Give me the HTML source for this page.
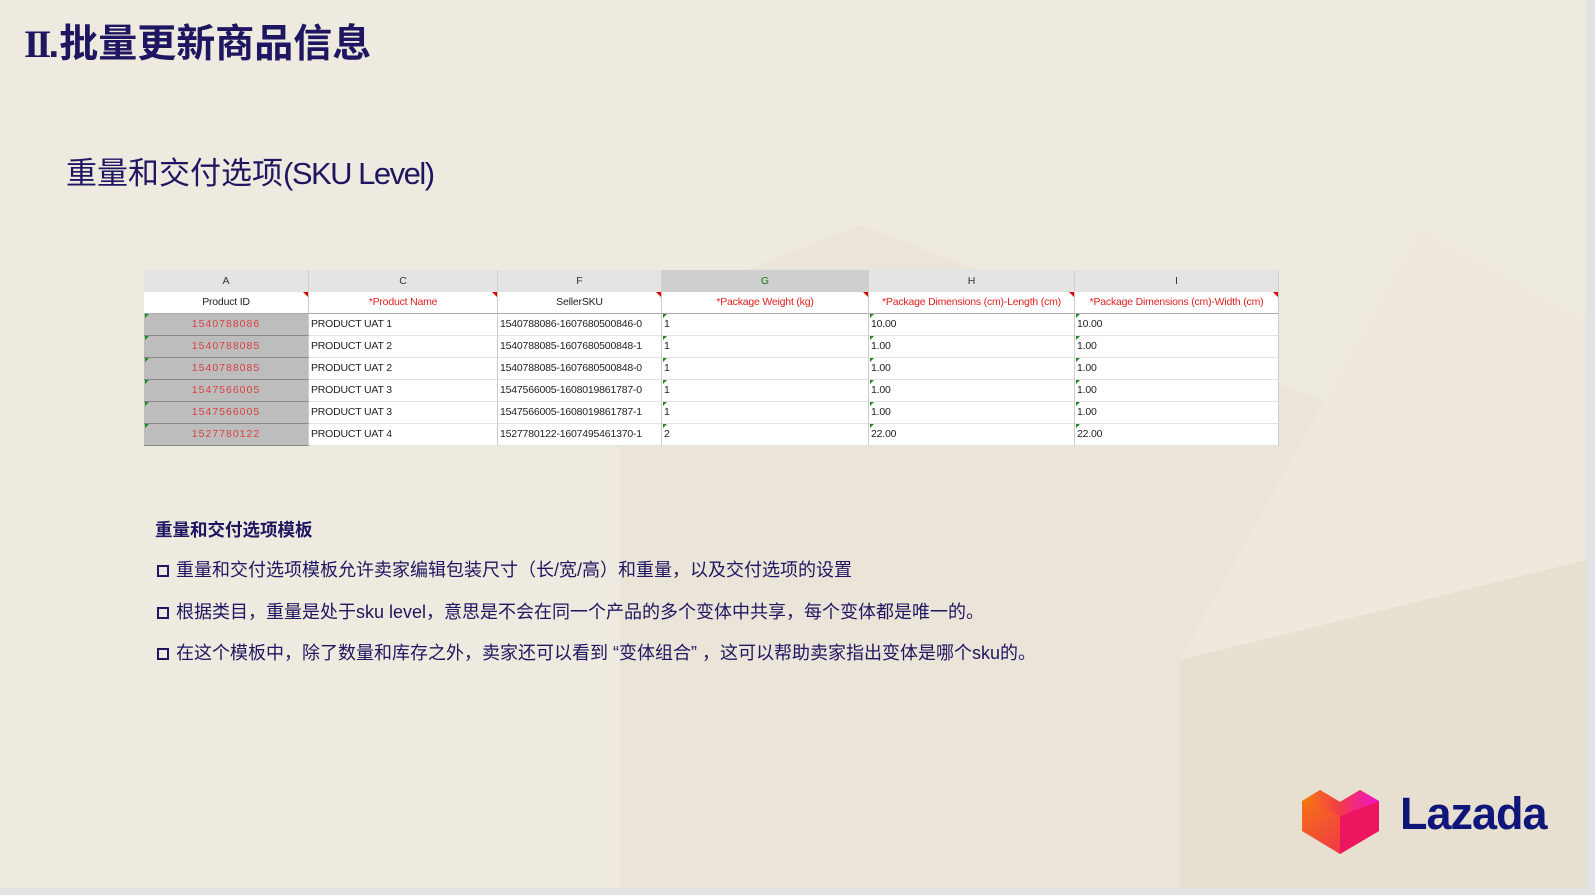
<!DOCTYPE html>
<html><head><meta charset="utf-8"><style>
*{margin:0;padding:0;box-sizing:border-box}
body{width:1595px;height:895px;position:relative;overflow:hidden;background:#e3e3e5;font-family:"Liberation Sans","Noto Sans CJK SC",sans-serif}
#slide{position:absolute;left:0;top:0;width:1586px;height:888px;background:#efeadf;overflow:hidden}
.a{position:absolute;white-space:nowrap}
.c{position:absolute;font-size:10.5px;color:#222;line-height:21.6px;white-space:nowrap;overflow:hidden;letter-spacing:-0.2px}
.hd{position:absolute;background:#e4e4e4;height:22px;top:270px;font-size:10.5px;color:#333;text-align:center;line-height:22px;border-right:1px solid #d0d0d0}
.tri{position:absolute;width:0;height:0;border-left:5px solid transparent;border-top:5px solid #d00}
.gt{position:absolute;width:0;height:0;border-right:4px solid transparent;border-top:4px solid #1a8a1a}
</style></head><body>
<div id="slide">
<svg class="a" style="left:0;top:0" width="1586" height="888">
<polygon points="620,320 860,225 1586,500 1586,888 620,888" fill="#ebe5d9"/>
<polygon points="1180,660 1586,560 1586,888 1180,888" fill="#e7e0d1"/>
<polygon points="1180,660 1420,230 1586,320 1586,560" fill="#eee8dd"/>
</svg>
<div class="a" style="left:24px;top:20px;font-size:39px;font-weight:bold;color:#1e1660;line-height:50px"><span style="font-family:'Liberation Serif',serif;letter-spacing:-3px">II</span>.批量更新商品信息</div>
<div class="a" style="left:66px;top:153px;font-size:31px;color:#1e1660;line-height:42px"><span>重量和交付选项</span><span style="letter-spacing:-1.5px">(SKU Level)</span></div>

<div class="a" style="left:144px;top:270px;width:1135px;height:176px;background:#fff"></div>
<div class="hd" style="left:144px;width:165px">A</div>
<div class="hd" style="left:309px;width:189px">C</div>
<div class="hd" style="left:498px;width:164px">F</div>
<div class="hd" style="left:662px;width:207px;background:#cfcfcf;color:#1a7a1a">G</div>
<div class="hd" style="left:869px;width:206px">H</div>
<div class="hd" style="left:1075px;width:204px">I</div>
<div class="a" style="left:144px;top:314px;width:165px;height:132px;background:#bdbdbd"></div>
<div id="rows"></div>
<div class="a" style="left:155px;top:517px;font-size:17.5px;font-weight:bold;color:#1e1660">重量和交付选项模板</div>
<div class="a" style="left:157px;top:558px;font-size:18px;color:#1e1660;line-height:24px"><span style="display:inline-block;width:12px;height:12px;border:2.5px solid #1e1660;margin-right:7px;vertical-align:-1px"></span>重量和交付选项模板允许卖家编辑包装尺寸（长/宽/高）和重量，以及交付选项的设置</div>
<div class="a" style="left:157px;top:600px;font-size:18px;color:#1e1660;line-height:24px"><span style="display:inline-block;width:12px;height:12px;border:2.5px solid #1e1660;margin-right:7px;vertical-align:-1px"></span>根据类目，重量是处于sku level，意思是不会在同一个产品的多个变体中共享，每个变体都是唯一的。</div>
<div class="a" style="left:157px;top:641px;font-size:18px;color:#1e1660;line-height:24px"><span style="display:inline-block;width:12px;height:12px;border:2.5px solid #1e1660;margin-right:7px;vertical-align:-1px"></span>在这个模板中，除了数量和库存之外，卖家还可以看到 “变体组合” ，这可以帮助卖家指出变体是哪个sku的。</div>

<svg class="a" style="left:1300px;top:786px" width="82" height="70" viewBox="0 0 82 70">
<defs><linearGradient id="g1" x1="0" y1="0" x2="1" y2="0"><stop offset="0" stop-color="#f77d0a"/><stop offset="0.5" stop-color="#f23a4a"/><stop offset="1" stop-color="#f012d0"/></linearGradient>
<linearGradient id="g2" x1="0" y1="0" x2="1" y2="1"><stop offset="0" stop-color="#f47a10"/><stop offset="1" stop-color="#f0205a"/></linearGradient></defs>
<path d="M2,15 L20,4 L40,16 L60,4 L79,15 L79,45 L40,68 L2,45 Z" fill="url(#g2)"/>
<path d="M40,28 L79,15 L79,45 L40,68 Z" fill="#ee1560"/>
<path d="M2,15 L20,4 L40,16 L60,4 L79,15 L40,30 Z" fill="url(#g1)"/>
</svg>
<div class="a" style="left:1400px;top:786px;font-size:45px;font-weight:bold;color:#10157a;line-height:56px;letter-spacing:-1px">Lazada</div>
</div>
<script>
var cols=[144,309,498,662,869,1075,1279];
var hdr=[["Product ID","#222"],["*Product Name","#e02020"],["SellerSKU","#222"],["*Package Weight (kg)","#e02020"],["*Package Dimensions (cm)-Length (cm)","#e02020"],["*Package Dimensions (cm)-Width (cm)","#e02020"]];
var data=[["1540788086","PRODUCT UAT 1","1540788086-1607680500846-0","1","10.00","10.00"],
["1540788085","PRODUCT UAT 2","1540788085-1607680500848-1","1","1.00","1.00"],
["1540788085","PRODUCT UAT 2","1540788085-1607680500848-0","1","1.00","1.00"],
["1547566005","PRODUCT UAT 3","1547566005-1608019861787-0","1","1.00","1.00"],
["1547566005","PRODUCT UAT 3","1547566005-1608019861787-1","1","1.00","1.00"],
["1527780122","PRODUCT UAT 4","1527780122-1607495461370-1","2","22.00","22.00"]];
var h="";
for(var i=0;i<6;i++){var w=cols[i+1]-cols[i];
h+='<div class="c" style="left:'+cols[i]+'px;top:292px;width:'+w+'px;height:22px;text-align:center;color:'+hdr[i][1]+';border-right:1px solid #ccc;border-bottom:1px solid #aaa">'+hdr[i][0]+'</div>';
h+='<div class="tri" style="left:'+(cols[i+1]-6)+'px;top:292px"></div>';}
for(var r=0;r<6;r++){var y=314+r*22;
for(var i=0;i<6;i++){var w=cols[i+1]-cols[i];
var st='left:'+cols[i]+'px;top:'+y+'px;width:'+w+'px;height:22px;border-bottom:1px solid '+(i==0?'#888':'#e2e2e2')+';border-right:1px solid #ccc;';
if(i==0)st+='text-align:center;color:#d84040;letter-spacing:1px;font-family:"DejaVu Sans Mono",monospace;font-size:11px;';else st+='padding-left:2px;';
h+='<div class="c" style="'+st+'">'+data[r][i]+'</div>';
if(i==0||i>=3)h+='<div class="gt" style="left:'+(cols[i]+1)+'px;top:'+(y)+'px"></div>';}}
document.getElementById('rows').innerHTML=h;
</script>
</body></html>
